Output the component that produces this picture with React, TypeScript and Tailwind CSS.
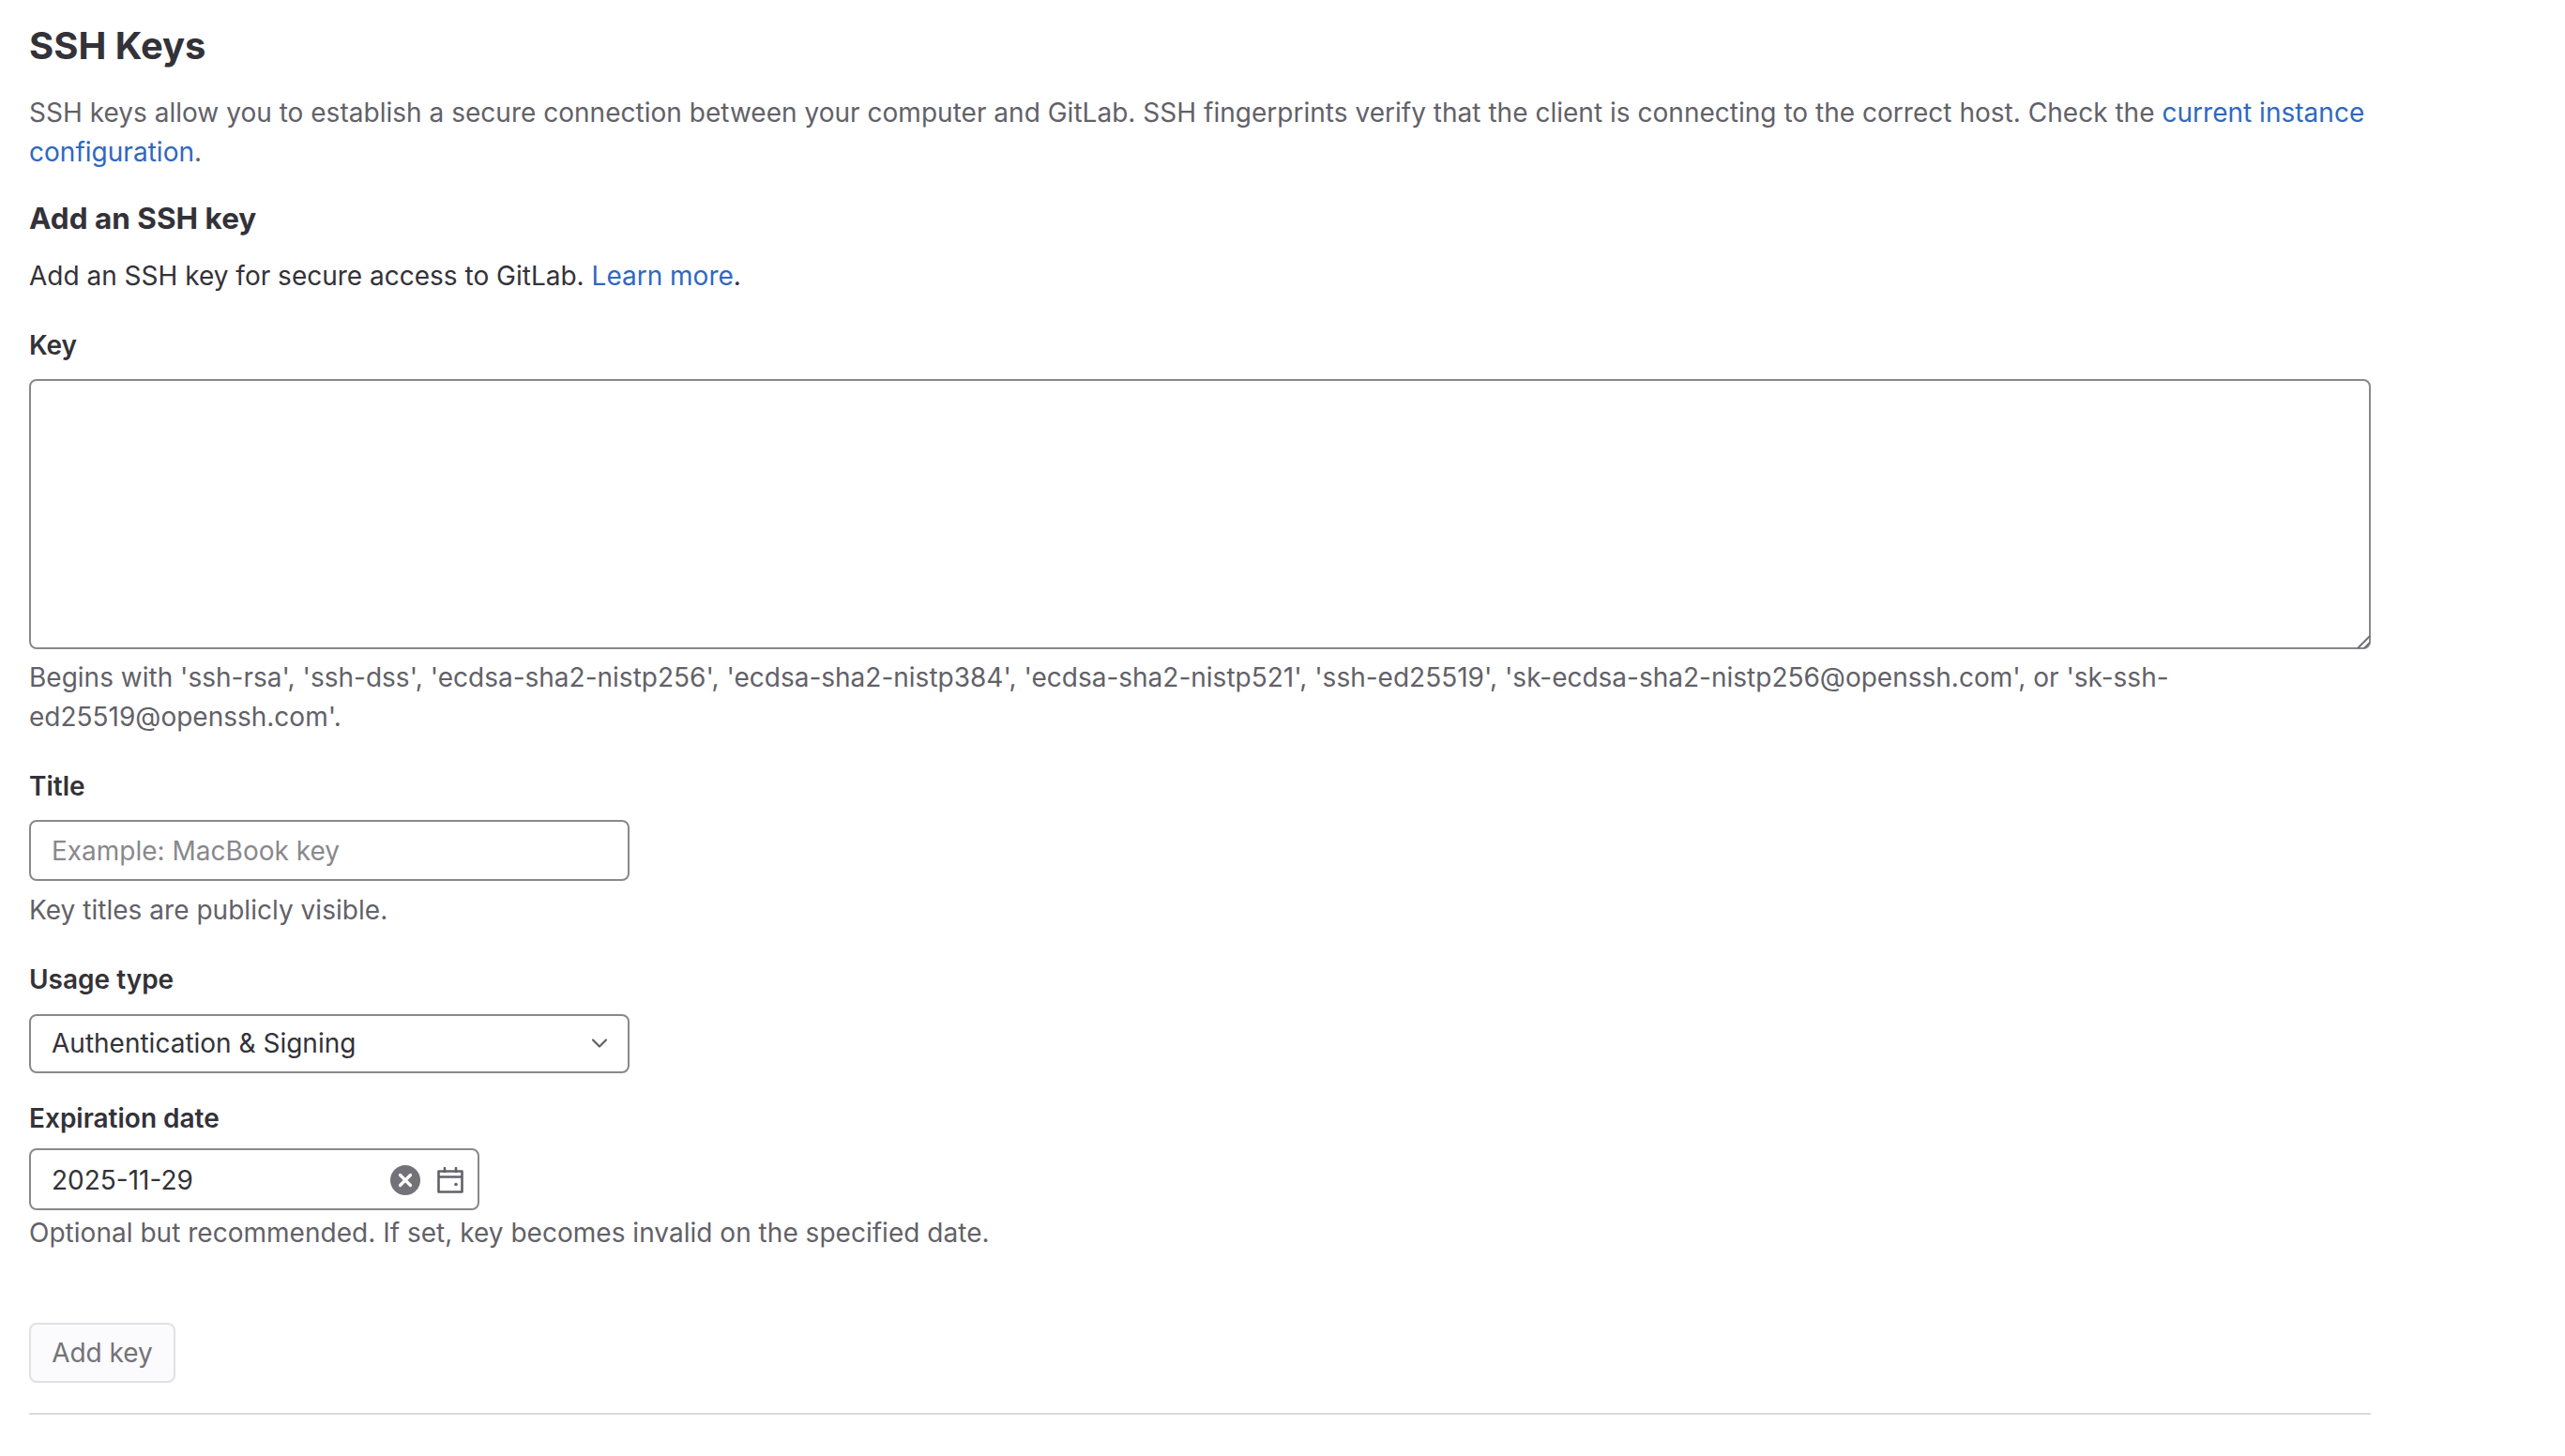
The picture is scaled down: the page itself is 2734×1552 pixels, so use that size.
export default function App() {
  return (
    <div className="min-h-[1552px] bg-white pl-[31px] w-[2527px] text-[28px] leading-[42px] text-[#333238] font-['Inter','Liberation_Sans',sans-serif]">
      <h1 className="pt-[25px] text-[40px] leading-[48px] font-bold">SSH Keys</h1>
      <p className="mt-[26px] text-[#626168] tracking-[0.02px]">
        SSH keys allow you to establish a secure connection between your computer and GitLab. SSH fingerprints verify that the client is connecting to the correct host. Check the{" "}
        <a className="text-[#2f68c0]">current instance configuration</a>.
      </p>
      <h2 className="mt-[30px] text-[31.5px] leading-[40px] font-bold">Add an SSH key</h2>
      <p className="mt-[20px]">
        Add an SSH key for secure access to GitLab. <a className="text-[#2f68c0]">Learn more</a>.
      </p>
      <label className="block mt-[32px] font-semibold">Key</label>
      <div className="relative mt-[15px] h-[288px]">
        <textarea className="block w-full h-full resize-none border-2 border-[#89888d] rounded-[8px] bg-white" />
        <svg width="16" height="16" viewBox="0 0 16 16" className="absolute right-0 bottom-0" fill="none" stroke="#737278" strokeWidth="2">
          <path d="M2 15 15 2M9 15l6-6" />
        </svg>
      </div>
      <p className="mt-[9px] text-[#626168]">
        Begins with 'ssh-rsa', 'ssh-dss', 'ecdsa-sha2-nistp256', 'ecdsa-sha2-nistp384', 'ecdsa-sha2-nistp521', 'ssh-ed25519', 'sk-ecdsa-sha2-nistp256@openssh.com', or 'sk-ssh-ed25519@openssh.com'.
      </p>
      <label className="block mt-[32px] font-semibold">Title</label>
      <input
        placeholder="Example: MacBook key"
        className="block mt-[15px] w-[640px] h-[65px] px-[22px] border-2 border-[#89888d] rounded-[8px] placeholder:text-[#89888d] outline-none"
      />
      <p className="mt-[10px] text-[#626168] tracking-[0.03px]">Key titles are publicly visible.</p>
      <label className="block mt-[32px] font-semibold">Usage type</label>
      <div className="mt-[16px] flex items-center justify-between w-[640px] h-[63px] pl-[22px] pr-[21px] pb-[2px] border-2 border-[#89888d] rounded-[8px]">
        <span>Authentication &amp; Signing</span>
        <svg width="18" height="18" viewBox="0 0 18 18" fill="none" stroke="#626168" strokeWidth="2.2" strokeLinecap="round" strokeLinejoin="round">
          <path d="M2 5.5 9 12.5l7-7" />
        </svg>
      </div>
      <label className="block mt-[27px] font-semibold">Expiration date</label>
      <div className="mt-[11px] flex items-center w-[480px] h-[66px] pl-[22px] pr-[15px] pt-[2px] border-2 border-[#89888d] rounded-[8px]">
        <span className="flex-1">2025-11-29</span>
        <svg width="32" height="32" viewBox="0 0 32 32" className="mr-[18px]">
          <circle cx="16" cy="16" r="16" fill="#737278" />
          <path d="M10.5 10.5l11 11m0-11l-11 11" stroke="#fff" strokeWidth="3.2" strokeLinecap="round" />
        </svg>
        <svg width="28" height="28" viewBox="0 0 28 28" fill="none" stroke="#626168" strokeWidth="2.6">
          <path d="M1.5 4.5h25v22h-25zM1.5 10.5h25" strokeLinejoin="round" />
          <path d="M8 1v4M20 1v4" strokeLinecap="round" />
          <circle cx="20" cy="18.5" r="1.8" fill="#626168" stroke="none" />
        </svg>
      </div>
      <p className="mt-[3px] text-[#626168] tracking-[0.02px]">Optional but recommended. If set, key becomes invalid on the specified date.</p>
      <div className="mt-[75px] flex items-center justify-center w-[156px] h-[64px] border-2 border-[#e1e1e4] rounded-[8px] bg-[#fbfafd] text-[#737278]">Add key</div>
      <hr className="mt-[32px] border-t-2 border-[#dcdcde]" />
    </div>
  );
}
